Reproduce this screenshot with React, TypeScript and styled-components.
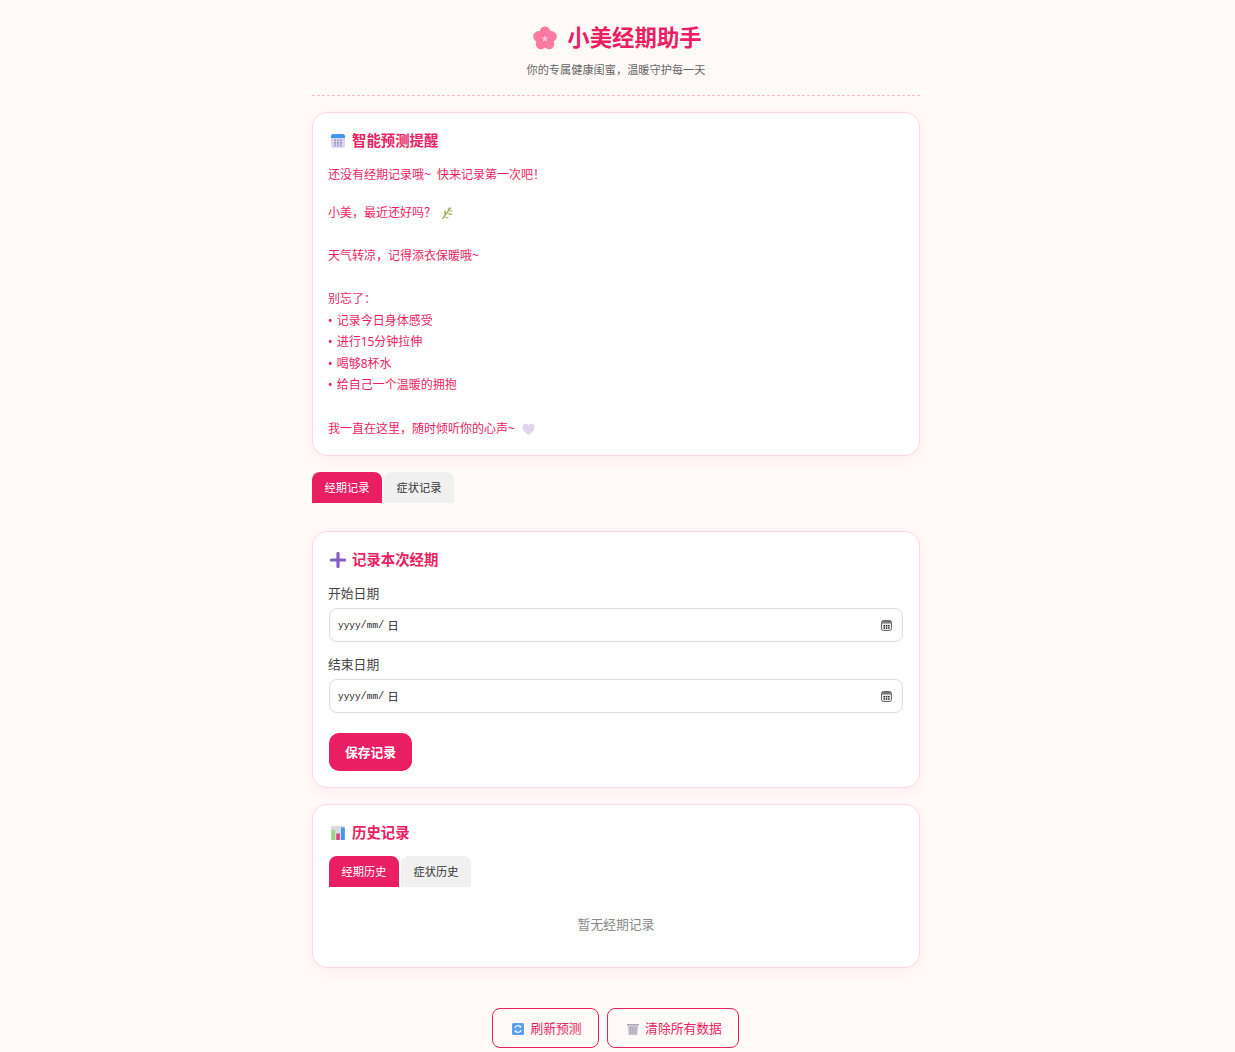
import styled, { createGlobalStyle } from 'styled-components';

const GlobalStyle = createGlobalStyle`
  html, body {
    margin: 0;
    padding: 0;
    background: #fff9f7;
  }
  body {
    font-family: "Noto Sans", "Noto Sans CJK SC", sans-serif;
    color: #333;
    overflow: hidden;
  }
`;

const PINK = '#e91e63';

const Page = styled.div`
  width: 608px;
  margin: 0 auto;
  position: relative;
  left: -1.5px;
  display: flex;
  flex-direction: column;
`;

const Header = styled.header`
  height: 95px;
  border-bottom: 1px dashed #f8bbd0;
  margin-bottom: 16px;
  display: flex;
  flex-direction: column;
  align-items: center;
`;

const Title = styled.h1`
  margin: 21px 0 0;
  padding-left: 3px;
  height: 33px;
  display: flex;
  align-items: center;
  gap: 10px;
  font-size: 22.4px;
  line-height: 33px;
  font-weight: 700;
  color: ${PINK};
`;

const Subtitle = styled.p`
  margin: 7px 0 0;
  font-size: 11.2px;
  line-height: 18px;
  color: #666;
`;

const Card = styled.section`
  background: #fff;
  border: 1px solid #ffd6e7;
  border-radius: 15px;
  padding: 16px;
  margin-bottom: 16px;
  box-shadow: 0 4px 12px rgba(233, 30, 99, 0.05);
`;

const CardTitle = styled.h2`
  margin: 0 0 11px;
  padding-left: 1px;
  height: 24px;
  display: flex;
  align-items: center;
  gap: 6px;
  font-size: 14.4px;
  line-height: 24px;
  font-weight: 700;
  color: ${PINK};
`;

const Message = styled.div<{ $gap?: number }>`
  margin: 0 0 ${(p) => p.$gap ?? 0}px -1px;
  font-size: 12px;
  line-height: 21.6px;
  color: ${PINK};
  white-space: pre-line;
  word-spacing: 1px;
`;

const Tilde = styled.span`
  letter-spacing: 2px;
`;

const InlineIcon = styled.svg<{ $gap: number }>`
  vertical-align: -3px;
  margin-left: ${(p) => p.$gap}px;
`;

const TabBar = styled.div<{ $gap: number }>`
  display: flex;
  gap: 2px;
  margin-bottom: ${(p) => p.$gap}px;
`;

const Tab = styled.button<{ $active?: boolean }>`
  width: 70px;
  height: 31px;
  padding: 0 0 2px;
  border: 0;
  border-radius: 8px 8px 0 0;
  font-family: inherit;
  font-size: 11.2px;
  background: ${(p) => (p.$active ? PINK : '#f0f0f0')};
  color: ${(p) => (p.$active ? '#fff' : '#333')};
`;

const Field = styled.div`
  display: flex;
  flex-direction: column;
  margin-bottom: 12px;
`;

const Label = styled.label`
  margin: 1px 0 5px -1px;
  font-size: 12.8px;
  line-height: 19px;
  color: #444;
`;

const DateBox = styled.div`
  height: 34px;
  box-sizing: border-box;
  border: 1px solid #ddd;
  border-radius: 8px;
  padding: 0 10px 0 8px;
  display: flex;
  align-items: center;
  justify-content: space-between;
  background: #fff;
`;

const DateText = styled.span`
  display: flex;
  align-items: center;
  font-family: "Liberation Mono", monospace;
  font-size: 9.4px;
  color: #222;
`;

const DateSlash = styled.span`
  font-size: 10.5px;
  color: #333;
`;

const DateDay = styled.span`
  margin-left: 3px;
  font-family: "Noto Sans CJK SC", sans-serif;
  font-size: 11.2px;
`;

const SaveButton = styled.button`
  width: 83px;
  height: 38px;
  margin-top: 20px;
  padding: 0 0 2px;
  display: block;
  border: 0;
  border-radius: 10px;
  background: ${PINK};
  color: #fff;
  font-family: inherit;
  font-size: 12.8px;
  font-weight: 700;
`;

const Empty = styled.div`
  text-align: center;
  font-size: 12.8px;
  line-height: 19px;
  color: #888;
  padding: 28px 0 17px;
`;

const Actions = styled.div`
  display: flex;
  justify-content: center;
  gap: 8px;
  margin-top: 24px;
  padding-right: 1px;
`;

const ActionButton = styled.button<{ $width: number }>`
  width: ${(p) => p.$width}px;
  height: 40px;
  padding: 0 0 2px 2px;
  display: flex;
  align-items: center;
  justify-content: center;
  gap: 5px;
  border: 1.5px solid ${PINK};
  border-radius: 8px;
  background: transparent;
  color: ${PINK};
  font-family: inherit;
  font-size: 12.8px;

  svg {
    margin-top: 4px;
  }
`;

const Flower = () => (
  <svg width="24" height="24" viewBox="0 0 24 24">
    {[0, 72, 144, 216, 288].map((a) => (
      <ellipse key={a} cx="12" cy="6.200" rx="5.400" ry="5.800" fill="#fb7aa3" transform={`rotate(${a} 12 12.500)`} />
    ))}
    <circle cx="12" cy="12.500" r="4.500" fill="#fb6f9c" />
    <path d="M12 8.700l1 2.700 2.900.1-2.300 1.800.8 2.800-2.400-1.600-2.400 1.600.8-2.800-2.300-1.800 2.900-.1z" fill="#f5c4e0" />
  </svg>
);

const CalendarIcon = () => (
  <svg width="16" height="16" viewBox="0 0 16 16">
    <rect x="1" y="1" width="14" height="14" rx="2.500" fill="#dcd6f2" />
    <path d="M1 5V3.500A2.500 2.500 0 0 1 3.500 1h9A2.500 2.500 0 0 1 15 3.500V5z" fill="#3f97ee" />
    {[4, 7, 10].map((x) =>
      [6.500, 9, 11.500].map((y) => <rect key={`${x}-${y}`} x={x} y={y} width="2" height="1.700" fill="#9c9cc6" />),
    )}
  </svg>
);

const HerbIcon = () => (
  <InlineIcon $gap={4} width="14" height="14" viewBox="0 0 14 14" fill="none">
    <path d="M2.500 13C5 9 8 6 11 1.500" stroke="#7f9e48" strokeWidth="1.100" />
    <path d="M4.800 9.500C3.600 7.500 3.900 5.500 5.200 3.800 6.400 6 6.400 8 4.800 9.500zM7 7.800c2-1 4-.8 6.200.2-2.200 1.300-4.200 1.100-6.200-.2zM4.500 11c1.800-.4 3.300 0 4.600 1-1.700.7-3.200.4-4.600-1zM7.800 5.500C7.400 3.900 7.800 2.500 9 1c.9 1.800.5 3.300-1.200 4.500zM9 5.200c1.100-.9 2.300-1.200 3.800-.8-1.100 1.200-2.300 1.500-3.800.8z" fill="#a3bd62" />
  </InlineIcon>
);

const HeartIcon = () => (
  <InlineIcon $gap={5} width="13" height="13" viewBox="0 0 13 13">
    <path d="M6.500 12C2.500 9 .5 7 .5 4.300A3 3 0 0 1 6.500 3a3 3 0 0 1 6 1.300C12.500 7 10.500 9 6.500 12z" fill="#e0d5f0" />
  </InlineIcon>
);

const PlusIcon = () => (
  <svg width="16" height="16" viewBox="0 0 16 16">
    <path d="M8 1.500v13M1.500 8h13" stroke="#8460c8" strokeWidth="3.200" strokeLinecap="round" />
  </svg>
);

const ChartIcon = () => (
  <svg width="16" height="16" viewBox="0 0 16 16">
    <rect x="1" y="1" width="14" height="14" rx="1.500" fill="#dbd8e4" />
    <rect x="1.500" y="5" width="3.500" height="10" fill="#9ad47c" />
    <rect x="6.300" y="8.500" width="3.500" height="6.500" fill="#e0398a" />
    <rect x="11" y="2.500" width="3.800" height="12.500" fill="#3f97ee" />
  </svg>
);

const RefreshIcon = () => (
  <svg width="14" height="14" viewBox="0 0 14 14" fill="none">
    <rect x="1" y="1" width="12" height="12" rx="1.500" fill="#5b9df0" />
    <path d="M3.800 6.200A3.300 3.300 0 0 1 9.700 5M10.200 7.800A3.300 3.300 0 0 1 4.300 9" stroke="#fff" strokeWidth="1.100" />
    <path d="M10.300 3.300v2.300H8zM3.700 10.700V8.400H6z" fill="#fff" />
  </svg>
);

const TrashIcon = () => (
  <svg width="14" height="14" viewBox="0 0 14 14">
    <path d="M1 2h12v1.500H1z" fill="#a9a5b5" />
    <path d="M2 3.500h10l-.6 9.500H2.600z" fill="#c3c0cc" />
    <path d="M4.500 5v6.500M7 5v6.500M9.500 5v6.500" stroke="#a5a1b2" strokeWidth="0.800" />
  </svg>
);

const PickerIcon = () => (
  <svg width="11" height="11" viewBox="0 0 11 11">
    <rect x="0.500" y="0.500" width="10" height="10" rx="2" fill="#eee" stroke="#666" />
    <rect x="1" y="1" width="9" height="2.500" fill="#777" />
    {[2.500, 4.800, 7.100].map((x) =>
      [5, 7.300].map((y) => <rect key={`${x}-${y}`} x={x} y={y} width="1.500" height="1.500" fill="#222" />),
    )}
  </svg>
);

const DateField = ({ label }: { label: string }) => (
  <Field>
    <Label>{label}</Label>
    <DateBox>
      <DateText>
        yyyy<DateSlash>/</DateSlash>mm<DateSlash>/</DateSlash>
        <DateDay>日</DateDay>
      </DateText>
      <PickerIcon />
    </DateBox>
  </Field>
);

export default function App() {
  return (
    <Page>
      <GlobalStyle />
      <Header>
        <Title>
          <Flower />
          小美经期助手
        </Title>
        <Subtitle>你的专属健康闺蜜，温暖守护每一天</Subtitle>
      </Header>

      <Card>
        <CardTitle>
          <CalendarIcon />
          智能预测提醒
        </CardTitle>
        <Message $gap={16}>
          还没有经期记录哦<Tilde>~</Tilde> 快来记录第一次吧！
        </Message>
        <Message>
          小美，最近还好吗？
          <HerbIcon />
          {'\n\n天气转凉，记得添衣保暖哦'}
          <Tilde>~</Tilde>
          {'\n\n别忘了：\n• 记录今日身体感受\n• 进行15分钟拉伸\n• 喝够8杯水\n• 给自己一个温暖的拥抱\n\n我一直在这里，随时倾听你的心声'}
          <Tilde>~</Tilde>
          <HeartIcon />
        </Message>
      </Card>

      <TabBar $gap={28}>
        <Tab $active>经期记录</Tab>
        <Tab>症状记录</Tab>
      </TabBar>

      <Card>
        <CardTitle>
          <PlusIcon />
          记录本次经期
        </CardTitle>
        <DateField label="开始日期" />
        <DateField label="结束日期" />
        <SaveButton>保存记录</SaveButton>
      </Card>

      <Card>
        <CardTitle>
          <ChartIcon />
          历史记录
        </CardTitle>
        <TabBar $gap={0}>
          <Tab $active>经期历史</Tab>
          <Tab>症状历史</Tab>
        </TabBar>
        <Empty>暂无经期记录</Empty>
      </Card>

      <Actions>
        <ActionButton $width={107}>
          <RefreshIcon />
          刷新预测
        </ActionButton>
        <ActionButton $width={132}>
          <TrashIcon />
          清除所有数据
        </ActionButton>
      </Actions>
    </Page>
  );
}
